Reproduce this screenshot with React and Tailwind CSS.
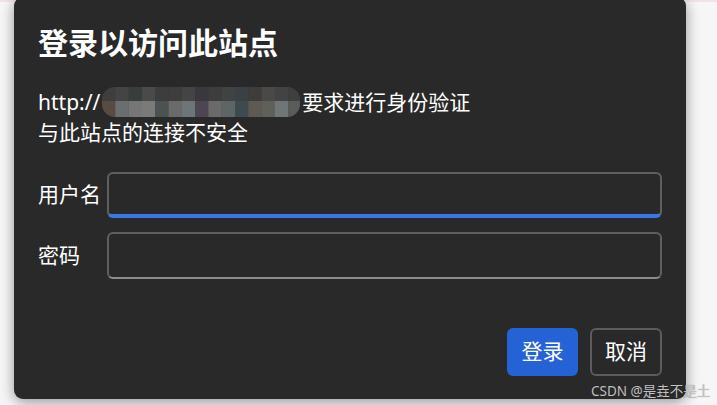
import React from 'react';

const TOP_ROW = ['#3e3e3e', '#444444', '#3a3d3d', '#4a4a48', '#3d3d3d', '#3e3c3c', '#444442', '#3b383d', '#3e3d3b', '#404342', '#3a4043', '#3e3d3b', '#4b4947', '#434343', '#3f3f3f'];
const BOTTOM_ROW = ['#5a4b42', '#6b6e6e', '#767676', '#7a7a78', '#4a5352', '#6a6a6a', '#6c7578', '#4d4552', '#6a6a6a', '#5d6565', '#3d4a50', '#5e5a52', '#60605a', '#6f7678', '#5a5c5c'];

function Mosaic() {
  return (
    <svg width="198" height="30" viewBox="0 0 198 30" className="mx-[2px] shrink-0">
      <defs>
        <clipPath id="pill">
          <rect x="0" y="0" width="198" height="30" rx="13" />
        </clipPath>
      </defs>
      <g clipPath="url(#pill)">
        <rect x="0" y="0" width="198" height="30" fill="#3a3a3a" />
        {TOP_ROW.map((c, i) => (
          <rect key={'t' + i} x={i * 13.3} y="0" width="13.4" height="14" fill={c} />
        ))}
        {BOTTOM_ROW.map((c, i) => (
          <rect key={'b' + i} x={i * 13.3} y="14" width="13.4" height="16" fill={c} />
        ))}
      </g>
    </svg>
  );
}

export default function App() {
  return (
    <div
      className="relative w-[717px] h-[405px] overflow-hidden bg-[#f6f6f6]"
      style={{ fontFamily: '"Noto Sans", "Noto Sans CJK SC", sans-serif' }}
    >
      <div className="absolute top-0 left-0 right-0 h-[2px] bg-[#f3e3e6]" />

      <div className="relative ml-[14px] mt-[-3px] w-[672px] h-[402px] rounded-[9px] bg-[#292929] text-white shadow-[0_3px_14px_rgba(0,0,0,0.4)] flex flex-col pl-6 pr-[24px]">
        <h1 className="mt-[26px] text-[30px] leading-[40px] font-bold">登录以访问此站点</h1>

        <div className="mt-[24px] text-[21px] leading-[30px]">
          <p className="flex items-center h-[30px]">
            <span>http://</span>
            <Mosaic />
            <span>要求进行身份验证</span>
          </p>
          <p>与此站点的连接不安全</p>
        </div>

        <div className="mt-[25px] grid grid-cols-[69px_1fr] gap-y-[14px] items-center text-[21px]">
          <label>用户名</label>
          <div className="h-[46px] rounded-[6px] border-2 border-[#5f5f5f] border-b-[4px] border-b-[#3b78e7] bg-[#292929]" />
          <label>密码</label>
          <div className="h-[47px] rounded-[6px] border-2 border-[#5f5f5f] border-b-[#8c8c8c] bg-[#292929]" />
        </div>

        <div className="mt-[49px] flex justify-end gap-3 text-[21px]">
          <button className="w-[71px] h-[48px] rounded-[6px] bg-[#2562d6] text-white">登录</button>
          <button className="w-[72px] h-[48px] rounded-[6px] border-2 border-[#5c5c5c] text-white">取消</button>
        </div>
      </div>

      <div className="absolute left-[591px] top-[382px] text-[13.5px] leading-[18px] text-[#c2c2c2] [text-shadow:0_0_1px_rgba(0,0,0,0.35)]">
        CSDN @是垚不是土
      </div>
    </div>
  );
}
